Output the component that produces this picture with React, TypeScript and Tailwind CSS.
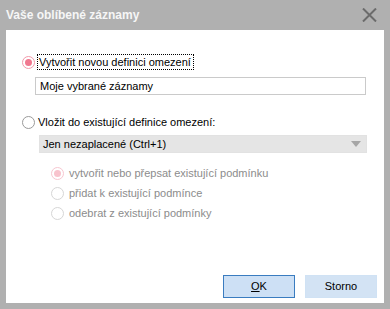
import React from "react";

function Radio({ checked, disabled }: { checked?: boolean; disabled?: boolean }) {
  const ring = disabled
    ? checked
      ? "border-[#f7c6d0]"
      : "border-[#d6d6d6]"
    : checked
    ? "border-[#f29aab]"
    : "border-[#9a9a9a]";
  const dot = disabled ? "bg-[#f8c3cd]" : "bg-[#f0788f]";
  return (
    <div className={`flex h-[13px] w-[13px] shrink-0 items-center justify-center rounded-full border bg-white ${ring}`}>
      {checked && <div className={`h-[7px] w-[7px] rounded-full ${dot}`} />}
    </div>
  );
}

export default function App() {
  return (
    <div
      className="flex h-[309px] w-[390px] flex-col bg-[#b0b0b0] text-[11px] text-black"
      style={{ fontFamily: '"Liberation Sans", Arial, sans-serif' }}
    >
      <div className="flex h-[30px] shrink-0 items-center justify-between pl-[6px] pr-[13px]">
        <span className="text-[12px] font-bold text-[#f6f6f6]">Vaše oblíbené záznamy</span>
        <svg width="15" height="14" viewBox="0 0 15 14">
          <path d="M1 0.5 L14 13.5 M14 0.5 L1 13.5" stroke="#6b6b6b" strokeWidth="2" />
        </svg>
      </div>
      <div className="mx-[6px] mb-[6px] flex flex-1 flex-col bg-white">
        <div className="ml-[16px] mt-[24px] flex h-[16px] items-center">
          <Radio checked />
          <div className="ml-[2px] flex h-[16px] items-center border border-dotted border-black pl-[1px] pr-[2px]">
            Vytvořit novou definici omezení
          </div>
        </div>
        <div className="ml-[29px] mt-[7px] flex h-[18px] w-[331px] items-center border border-[#cacaca] pl-[4px]">
          Moje vybrané záznamy
        </div>
        <div className="ml-[16px] mt-[19px] flex h-[16px] items-center">
          <Radio />
          <span className="ml-[3px]">Vložit do existující definice omezení:</span>
        </div>
        <div className="ml-[33px] mt-[5px] flex h-[18px] w-[328px] items-center justify-between border border-[#e2e2e2] bg-[#e5e5e5] pl-[3px] pr-[5px]">
          <span>Jen nezaplacené (Ctrl+1)</span>
          <svg width="10" height="6" viewBox="0 0 10 6">
            <path d="M0 0 H10 L5 6 Z" fill="#a6a6a6" />
          </svg>
        </div>
        <div className="ml-[45px] mt-[10px] flex flex-col text-[#8c8c8c]">
          <div className="flex h-[20px] items-center">
            <Radio checked disabled />
            <span className="ml-[5px]">vytvořit nebo přepsat existující podmínku</span>
          </div>
          <div className="flex h-[20px] items-center">
            <Radio disabled />
            <span className="ml-[5px]">přidat k existující podmínce</span>
          </div>
          <div className="flex h-[20px] items-center">
            <Radio disabled />
            <span className="ml-[5px]">odebrat z existující podmínky</span>
          </div>
        </div>
        <div className="flex-1" />
        <div className="mb-[5px] mr-[7px] flex justify-end gap-[10px]">
          <button className="flex h-[23px] w-[72px] items-center justify-center border border-[#3a7cc0] bg-[#cde0f5]">
            <span>
              <span className="underline">O</span>K
            </span>
          </button>
          <button className="flex h-[23px] w-[72px] items-center justify-center border border-[#d0e2f4] bg-[#d3e3f4]">
            Storno
          </button>
        </div>
      </div>
    </div>
  );
}
